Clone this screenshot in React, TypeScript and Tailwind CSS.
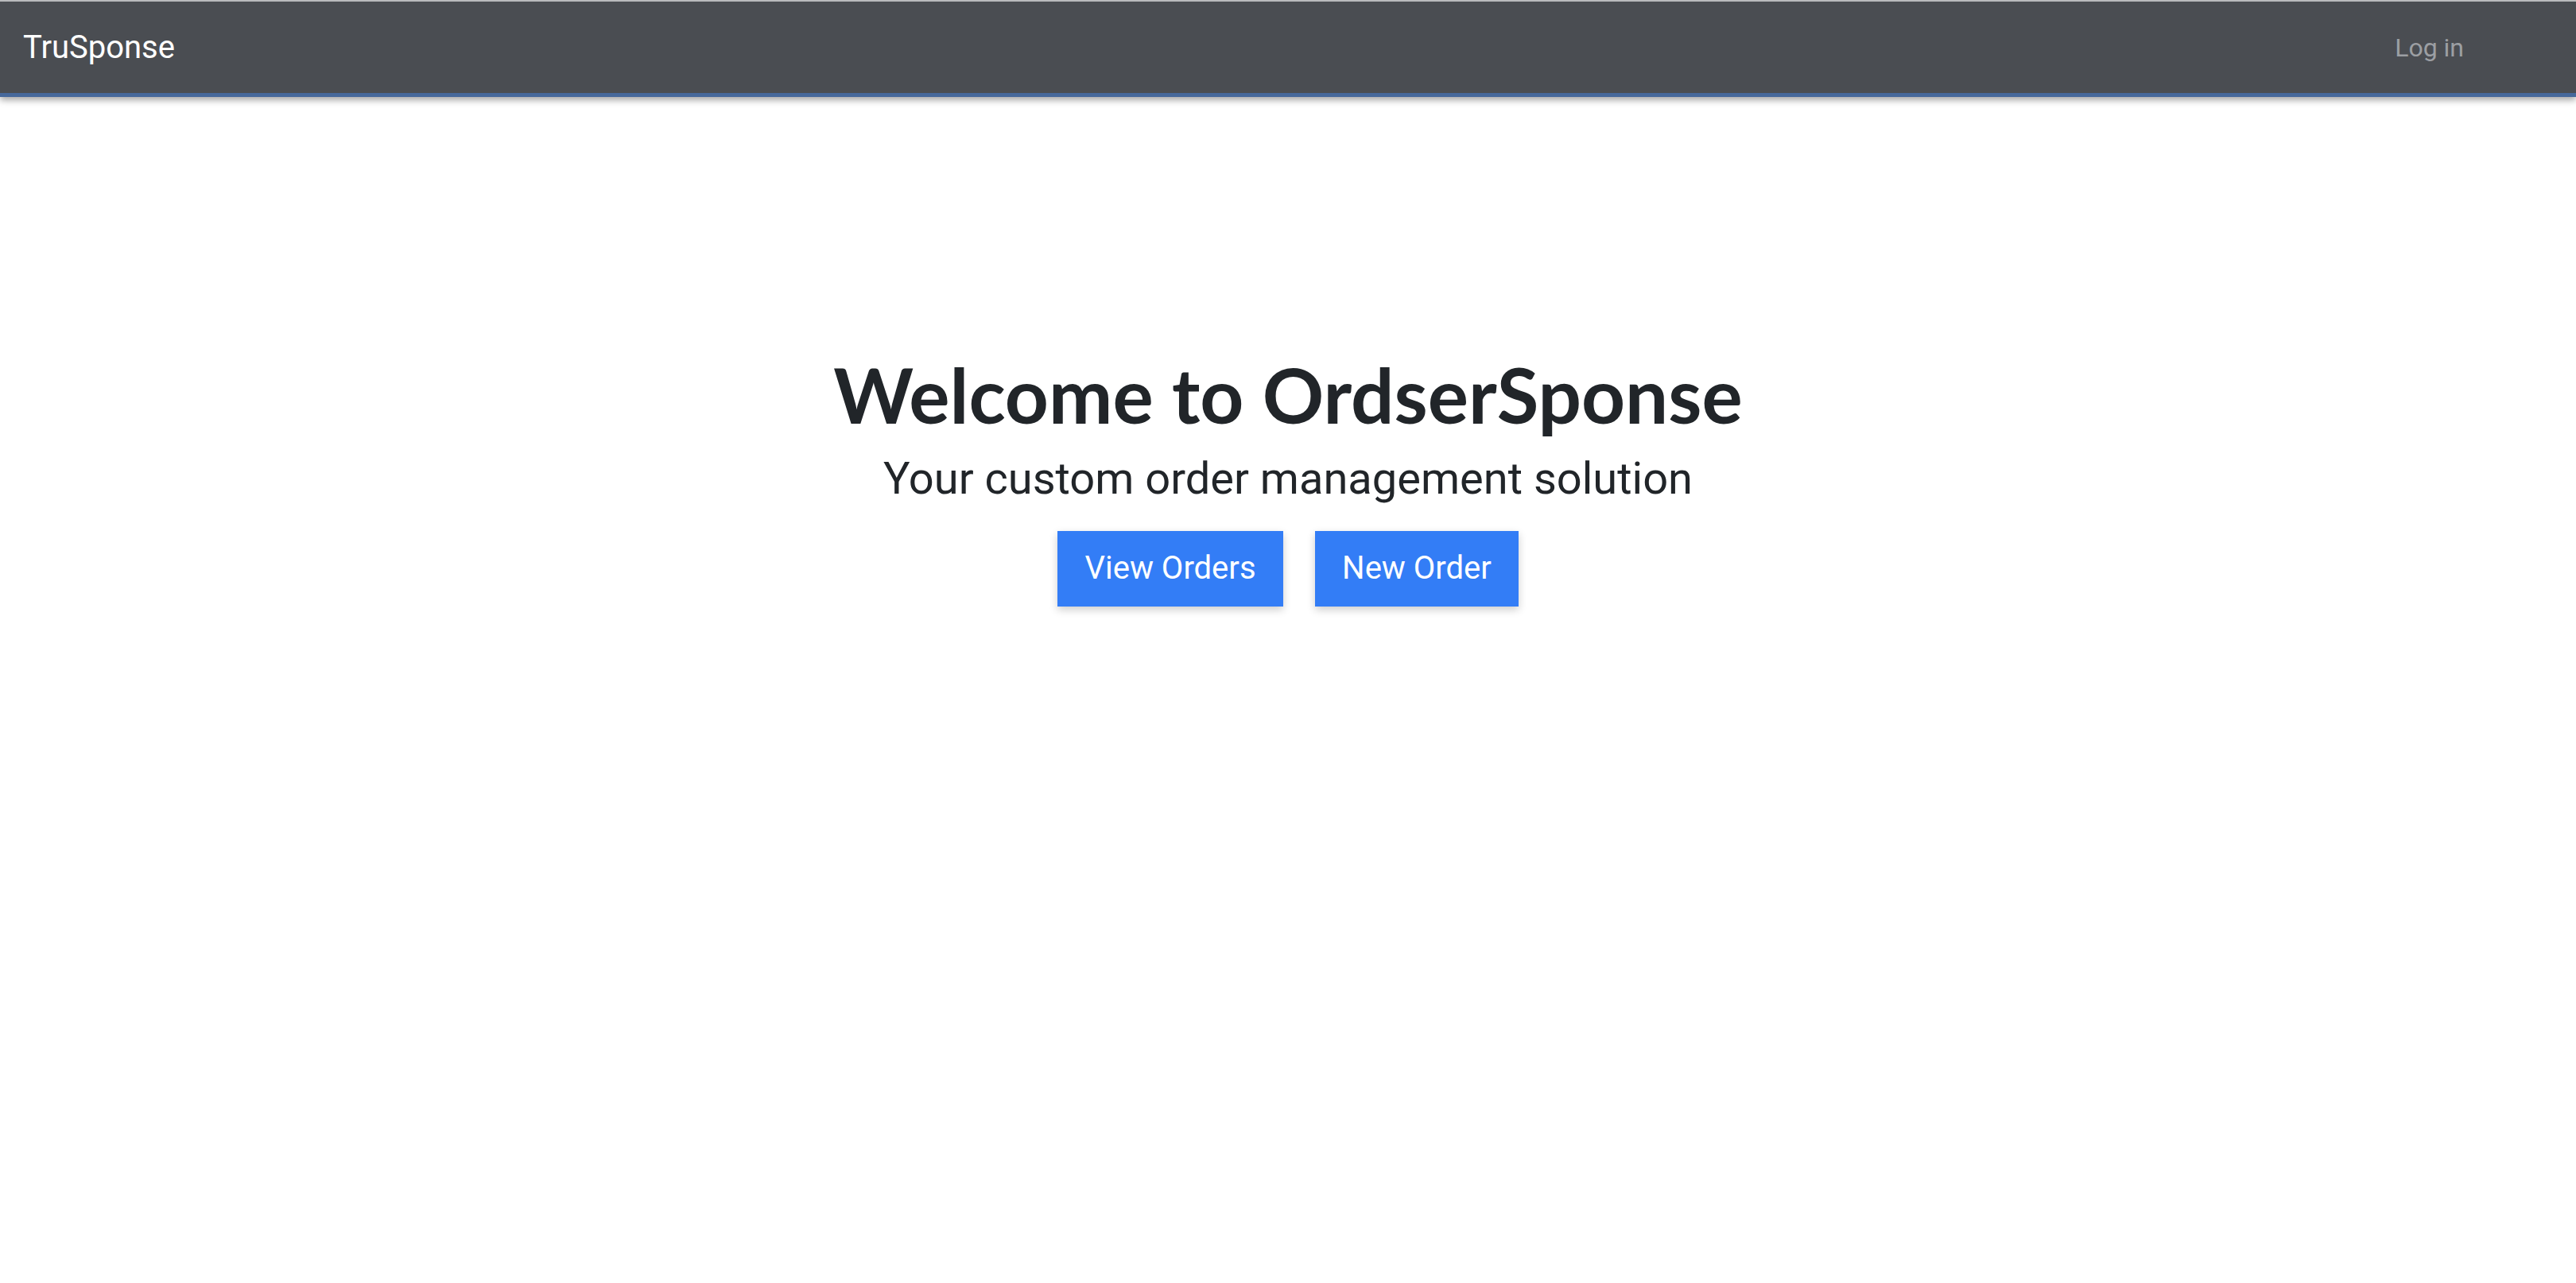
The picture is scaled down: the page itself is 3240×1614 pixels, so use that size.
export default function App() {
  return (
    <div className="min-h-screen w-full bg-white font-['Roboto',sans-serif]">
      <nav className="relative z-10 flex h-[122px] items-center justify-between border-t-2 border-t-[#b9babc] border-b-[5px] border-b-[#46689b] bg-[#4a4d52] shadow-[0_4px_8px_rgba(0,0,0,0.35)]">
        <a className="pl-[29px] text-[40px] leading-none text-white">TruSponse</a>
        <a className="pr-[141px] text-[32px] leading-none text-[#9c9fa3]">Log in</a>
      </nav>
      <main className="flex flex-col items-center pt-[321px] text-[#212529]">
        <h1 className="font-['Lato',sans-serif] text-[96px] font-bold leading-[1.1]">Welcome to OrdserSponse</h1>
        <p className="mt-[20px] text-[56px] leading-[1.2]">Your custom order management solution</p>
        <div className="mt-[32px] flex gap-[40px]">
          <button className="h-[95px] w-[284px] bg-[#337df6] text-[40px] text-white shadow-[0_4px_10px_rgba(0,0,0,0.2)]">View Orders</button>
          <button className="h-[95px] w-[256px] bg-[#337df6] text-[40px] text-white shadow-[0_4px_10px_rgba(0,0,0,0.2)]">New Order</button>
        </div>
      </main>
    </div>
  );
}
